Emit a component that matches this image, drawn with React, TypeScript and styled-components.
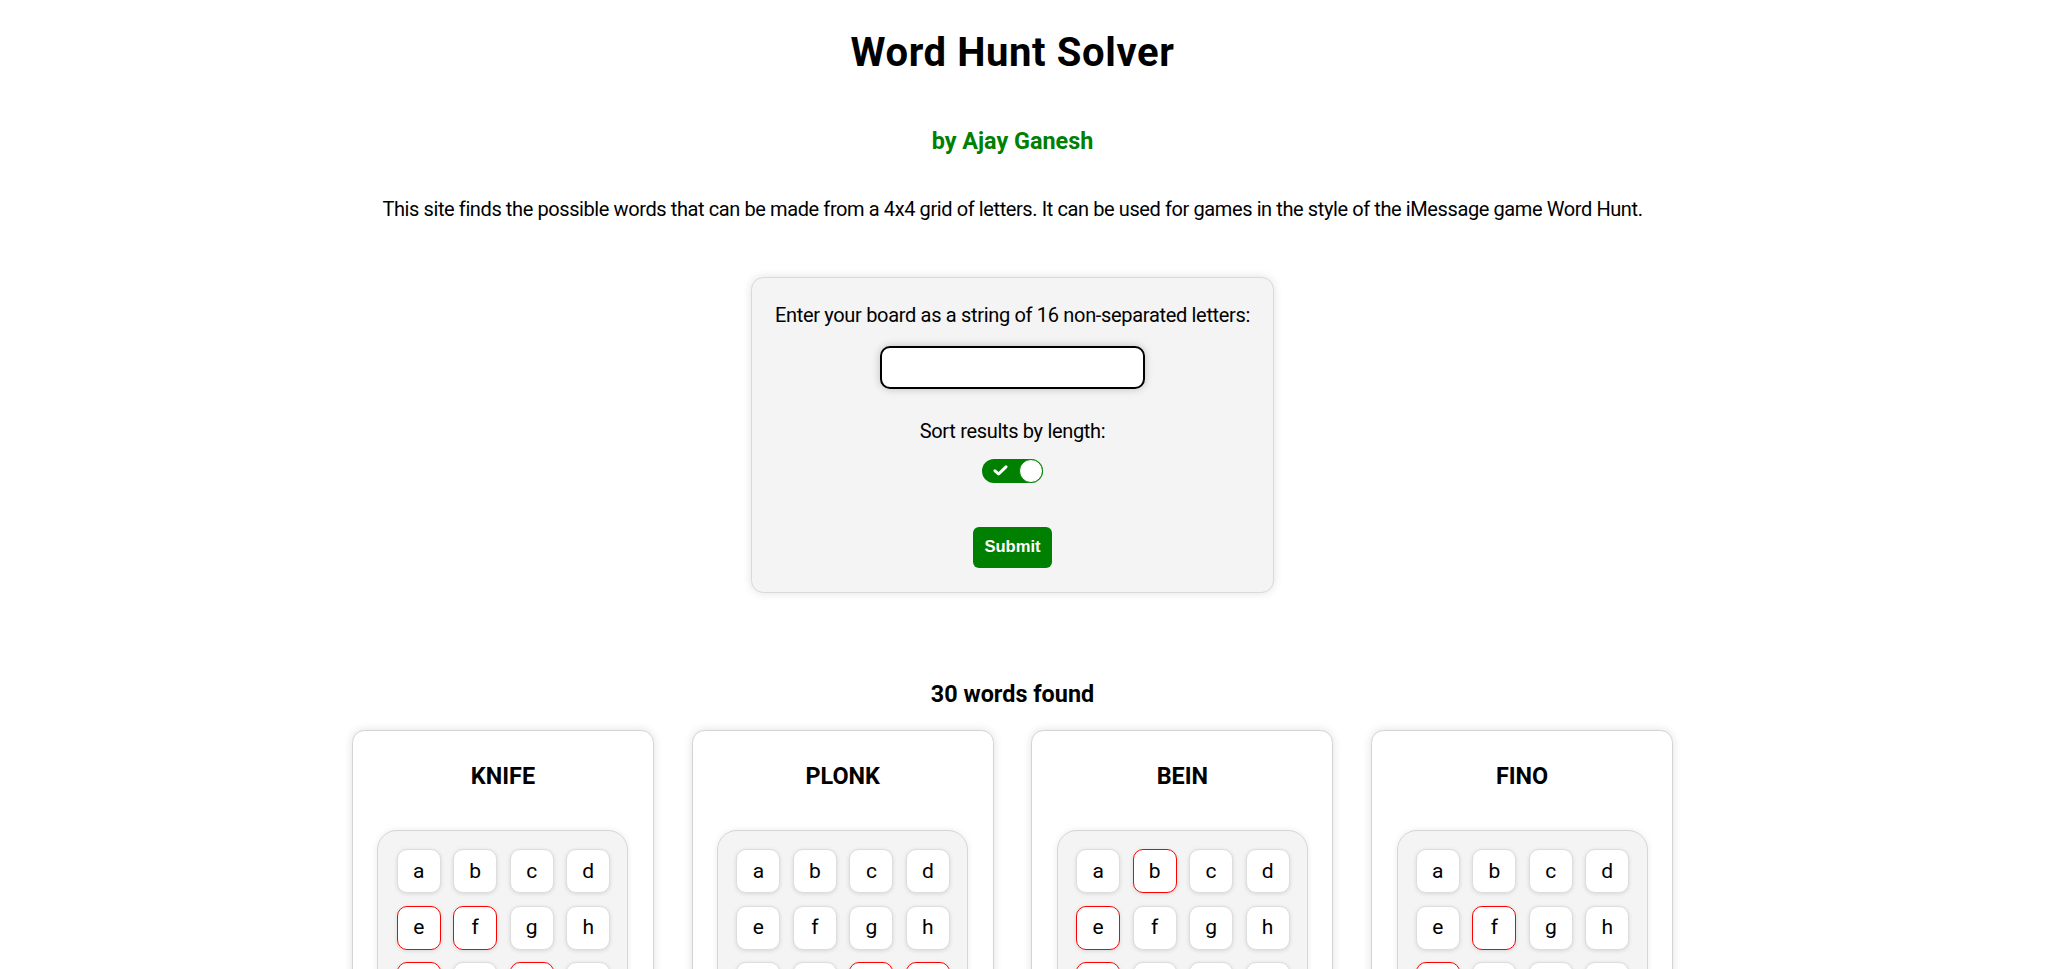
import { useState } from "react";
import styled, { createGlobalStyle } from "styled-components";

const GlobalStyle = createGlobalStyle`
  body {
    margin: 0;
    background: #ffffff;
    color: #000000;
    font-family: Roboto, "Open Sans", sans-serif;
  }
  * {
    box-sizing: border-box;
  }
`;

const LETTERS = "abcdefghijklmnop".split("");

const WORDS = [
  "knife", "plonk", "bein", "fino", "fink", "glop", "jink", "knop",
  "mink", "mino", "nife", "fab", "fie", "fin", "ink", "jin",
  "kop", "lop", "nim", "pol", "abe", "fai", "jib", "nok",
  "onk", "gok", "hlo", "ief", "bea", "fae",
];

const Page = styled.div`
  width: 2034px;
  padding-right: 9px;
  display: flex;
  flex-direction: column;
  align-items: center;
  padding-bottom: 60px;
`;

const Title = styled.h1`
  margin: 28.8px 0 0;
  font-size: 40px;
  line-height: 48px;
  font-weight: 700;
  letter-spacing: 0.6px;
`;

const Byline = styled.h3`
  margin: 49.8px 0 0;
  font-size: 23.4px;
  line-height: 28px;
  font-weight: 700;
  color: #008000;
`;

const Intro = styled.p`
  margin: 41.8px 0 0;
  font-size: 20px;
  line-height: 26px;
  letter-spacing: -0.4px;
  white-space: nowrap;
`;

const FormCard = styled.form`
  margin-top: 54.6px;
  width: 523px;
  padding: 24.4px 25px 24px;
  background: #f4f4f4;
  border: 1px solid #d9d9d9;
  border-radius: 12.5px;
  box-shadow: 0 0 10px rgba(0, 0, 0, 0.12);
  display: flex;
  flex-direction: column;
  align-items: center;
`;

const FieldLabel = styled.label`
  font-size: 20px;
  line-height: 26px;
  letter-spacing: -0.32px;
  white-space: nowrap;
`;

const BoardInput = styled.input`
  margin-top: 17.6px;
  width: 265px;
  height: 43px;
  padding: 0 10px;
  border: 2.5px solid #000000;
  border-radius: 10px;
  background: #ffffff;
  box-shadow: 0 0 8px rgba(0, 0, 0, 0.22);
  font-size: 20px;
  font-family: inherit;
  outline: none;
`;

const SortLabel = styled(FieldLabel)`
  margin-top: 29.4px;
`;

const ToggleTrack = styled.button<{ $on: boolean }>`
  margin-top: 14.6px;
  position: relative;
  width: 61px;
  height: 24px;
  padding: 0;
  border: none;
  border-radius: 12px;
  background: ${(p) => (p.$on ? "#008000" : "#4d4d4d")};
  cursor: pointer;
  display: flex;
  align-items: center;
`;

const ToggleCheck = styled.svg<{ $on: boolean }>`
  margin-left: 11px;
  width: 15px;
  height: 11px;
  opacity: ${(p) => (p.$on ? 1 : 0)};
`;

const ToggleKnob = styled.span<{ $on: boolean }>`
  position: absolute;
  top: 0;
  left: ${(p) => (p.$on ? "37px" : "0")};
  width: 24px;
  height: 24px;
  border-radius: 50%;
  background: #ffffff;
  border: 1.5px solid ${(p) => (p.$on ? "#008000" : "#4d4d4d")};
`;

const SubmitButton = styled.button`
  margin-top: 44px;
  width: 79px;
  height: 41px;
  border: none;
  border-radius: 6px;
  background: #008000;
  color: #ffffff;
  font-family: "Liberation Sans", Arial, sans-serif;
  font-weight: 700;
  font-size: 16.6px;
  cursor: pointer;
`;

const ResultsHeading = styled.h3`
  margin: 86.6px 0 0;
  font-size: 23.4px;
  line-height: 28px;
  font-weight: 700;
`;

const ResultsGrid = styled.div`
  margin-top: 22.4px;
  display: grid;
  grid-template-columns: repeat(4, 302px);
  column-gap: 37.7px;
  row-gap: 37.7px;
`;

const WordCard = styled.div`
  width: 302px;
  padding: 30.6px 25px 25px;
  background: #ffffff;
  border: 1px solid #d4d4d4;
  border-radius: 12.5px;
  box-shadow: 0 0 10px rgba(0, 0, 0, 0.12);
  display: flex;
  flex-direction: column;
  align-items: center;
`;

const WordTitle = styled.h3`
  margin: 0;
  font-size: 23.4px;
  line-height: 28px;
  font-weight: 700;
`;

const Board = styled.div`
  margin-top: 40.4px;
  width: 251px;
  padding: 18.25px;
  background: #f4f4f4;
  border: 1px solid #d6d6d6;
  border-radius: 20px;
  box-shadow: 0 0 6px rgba(0, 0, 0, 0.08);
  display: grid;
  grid-template-columns: repeat(4, 44px);
  gap: 12.5px;
`;

const Tile = styled.div<{ $active: boolean }>`
  width: 44px;
  height: 44px;
  display: flex;
  align-items: center;
  justify-content: center;
  background: #ffffff;
  border: 1px solid ${(p) => (p.$active ? "#ff0000" : "#dddddd")};
  border-radius: 10px;
  box-shadow: 0 1px 4px rgba(0, 0, 0, 0.12);
  font-size: 21px;
  line-height: 1;
`;

function ResultCard({ word }: { word: string }) {
  return (
    <WordCard>
      <WordTitle>{word.toUpperCase()}</WordTitle>
      <Board>
        {LETTERS.map((letter) => (
          <Tile key={letter} $active={word.includes(letter)}>
            {letter}
          </Tile>
        ))}
      </Board>
    </WordCard>
  );
}

export default function App() {
  const [board, setBoard] = useState("");
  const [sortByLength, setSortByLength] = useState(true);

  return (
    <Page>
      <GlobalStyle />
      <Title>Word Hunt Solver</Title>
      <Byline>by Ajay Ganesh</Byline>
      <Intro>
        This site finds the possible words that can be made from a 4x4 grid of
        letters. It can be used for games in the style of the iMessage game
        Word Hunt.
      </Intro>

      <FormCard onSubmit={(e) => e.preventDefault()}>
        <FieldLabel htmlFor="board">
          Enter your board as a string of 16 non-separated letters:
        </FieldLabel>
        <BoardInput
          id="board"
          autoFocus
          value={board}
          onChange={(e) => setBoard(e.target.value)}
        />
        <SortLabel>Sort results by length:</SortLabel>
        <ToggleTrack
          type="button"
          $on={sortByLength}
          onClick={() => setSortByLength(!sortByLength)}
          aria-label="Sort results by length"
        >
          <ToggleCheck $on={sortByLength} viewBox="0 0 15 11">
            <path
              d="M2 5.8 L5.6 9 L13 1.8"
              fill="none"
              stroke="#ffffff"
              strokeWidth="3"
              strokeLinecap="round"
              strokeLinejoin="round"
            />
          </ToggleCheck>
          <ToggleKnob $on={sortByLength} />
        </ToggleTrack>
        <SubmitButton type="submit">Submit</SubmitButton>
      </FormCard>

      <ResultsHeading>{WORDS.length} words found</ResultsHeading>
      <ResultsGrid>
        {WORDS.map((word) => (
          <ResultCard key={word} word={word} />
        ))}
      </ResultsGrid>
    </Page>
  );
}
